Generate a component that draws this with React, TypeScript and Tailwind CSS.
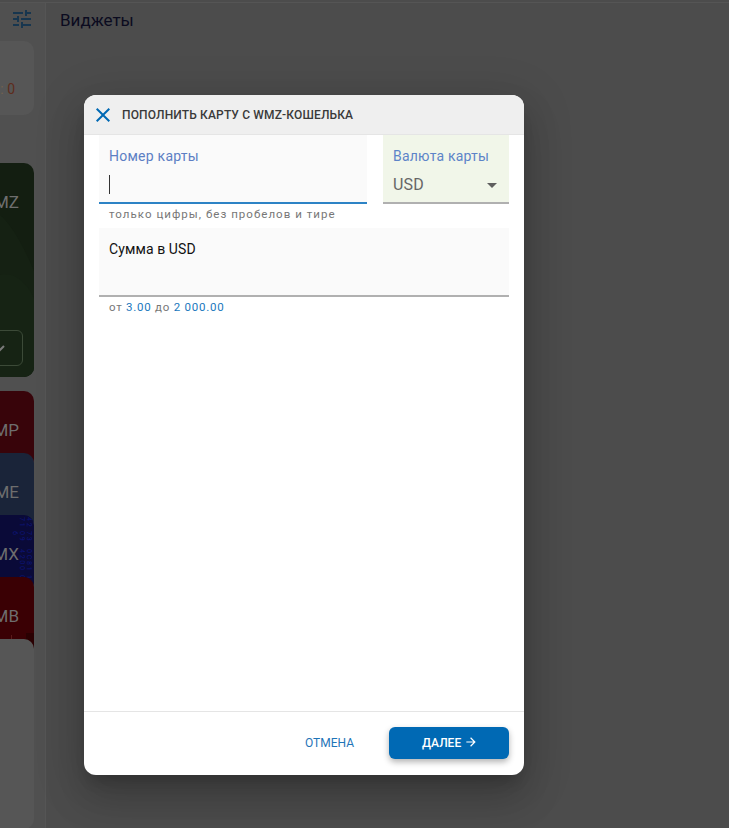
export default function App() {
  const roboto = { fontFamily: 'Roboto, "Noto Sans", sans-serif' };
  const columns = ["4 2 7 1", "7 3 0 9 6", "0 C 8 1 4 2 0 0", "1 0 C 0 4 9"];
  return (
    <div className="relative h-[828px] w-[729px] overflow-hidden bg-[#4c4c4c] font-['Roboto',sans-serif]">
      <div className="flex h-full flex-col">
        <div className="h-[3px] border-b border-[#555555]" />
        <div className="flex min-h-0 flex-1">
          <aside className="flex w-[46px] shrink-0 flex-col overflow-hidden border-r border-[#555555] bg-[#505050]">
            <div className="flex h-[38px] shrink-0 pl-[10px] pt-[4px]">
              <svg viewBox="0 0 24 24" className="h-6 w-6 fill-[#17364f]">
                <path d="M3 17v2h6v-2H3zM3 5v2h10V5H3zm10 16v-2h8v-2h-8v-2h-2v6h2zM7 9v2H3v2h4v2h2V9H7zm14 4v-2H11v2h10zm-6-4h2V7h4V5h-4V3h-2v6z" />
              </svg>
            </div>
            <div className="flex h-[74px] w-[34px] shrink-0 items-center justify-end rounded-r-[10px] bg-[#565656] pr-[19px] pt-[22px] text-sm text-[#5e2c1c]">
              <span className="text-[#75624f]">:&nbsp;</span>0
            </div>

            <div className="relative mt-[48px] flex h-[214px] w-[34px] shrink-0 flex-col overflow-hidden rounded-r-[10px] bg-[#131e11] pt-[28px]">
              <svg viewBox="0 0 34 214" className="absolute inset-0 h-full w-full">
                <path d="M0 52C12 62 24 84 34 108V214H0Z" className="fill-[#152113]" />
                <path d="M0 112C14 108 28 120 34 136V214H0Z" className="fill-[#162314]" />
              </svg>
              <div className="relative flex justify-end whitespace-nowrap pr-[15px] text-[17px] leading-[22px] text-[#6e6e6e]">MZ</div>
              <div className="relative ml-[-20px] mt-[117px] flex h-[36px] w-[43px] shrink-0 items-center justify-end rounded-md border border-[#3c4a38] pr-[16px]">
                <svg viewBox="0 0 12 12" className="h-3 w-3 fill-none stroke-[#7a7a7a] stroke-2">
                  <path d="M2 4l4 4 4-4" />
                </svg>
              </div>
            </div>

            <div className="mt-[14px] flex h-[78px] w-[34px] shrink-0 justify-end whitespace-nowrap rounded-r-[10px] bg-[#38040a] pr-[15px] pt-[28px] text-[17px] leading-[22px] text-[#6e6e6e]">МР</div>
            <div className="mt-[-16px] flex h-[78px] w-[34px] shrink-0 justify-end whitespace-nowrap rounded-r-[10px] bg-[#1a2439] pr-[15px] pt-[28px] text-[17px] leading-[22px] text-[#6e6e6e]">МЕ</div>
            <div className="relative mt-[-16px] h-[78px] w-[34px] shrink-0 overflow-hidden rounded-r-[10px] bg-[#0a0a38]">
              <div className="absolute right-[2px] top-[2px] flex gap-[3px] text-[7px] leading-[7px] text-[#0c1478] [writing-mode:vertical-rl]">
                {columns.map((c) => (
                  <span key={c}>{c}</span>
                ))}
              </div>
              <div className="relative flex justify-end whitespace-nowrap pr-[15px] pt-[28px] text-[17px] leading-[22px] text-[#6e6e6e]">МХ</div>
            </div>
            <div className="relative mt-[-16px] flex h-[78px] w-[34px] shrink-0 justify-end overflow-hidden whitespace-nowrap rounded-r-[10px] bg-[#3a0004] pr-[15px] pt-[28px] text-[17px] leading-[22px] text-[#6e6e6e]">
              МВ
              <span className="absolute bottom-0 left-[11px] h-[20px] w-px bg-[#5a1a1a]" />
              <span className="absolute bottom-0 right-0 h-[22px] w-[8px] bg-[#2a0002]" />
            </div>
            <div className="relative mt-[-16px] h-[190px] w-[34px] shrink-0 rounded-r-[10px] bg-[#565656]" />
          </aside>
          <main className="flex-1 pl-[14px] pt-[5px] text-[17px] text-[#0b0b1f]">Виджеты</main>
        </div>
      </div>

      <div
        style={roboto}
        className="absolute left-[84px] top-[95px] flex h-[680px] w-[440px] flex-col overflow-hidden rounded-xl bg-white shadow-[0_11px_15px_-7px_rgba(0,0,0,0.2),0_24px_38px_3px_rgba(0,0,0,0.14),0_9px_46px_8px_rgba(0,0,0,0.12)]"
      >
        <div className="flex h-10 shrink-0 items-center border-b border-[#e5e5e5] bg-[#efefef] pl-[7px]">
          <svg viewBox="0 0 24 24" className="h-6 w-6 fill-[#0069b4]">
            <path d="M19 6.41L17.59 5 12 10.59 6.41 5 5 6.41 10.59 12 5 17.59 6.41 19 12 13.41 17.59 19 19 17.59 13.41 12z" />
          </svg>
          <span className="ml-[7px] text-xs font-medium uppercase tracking-[0.15px] text-[#3a3a3a]">Пополнить карту с WMZ-кошелька</span>
        </div>

        <div className="flex-1 px-[15px]">
          <div className="flex gap-4">
            <div className="w-[268px]">
              <div className="h-[69px] border-b-2 border-[#2d83c5] bg-[#fafafa] px-[10px] pt-[12px]">
                <div className="text-sm leading-[18px] tracking-[0.25px] text-[#5d7fc4]">Номер карты</div>
                <div className="mt-[10px] h-[19px] w-px bg-[#333]" />
              </div>
              <div className="whitespace-nowrap px-[10px] pb-[1px] pt-[3px] text-[11.5px] leading-[14px] tracking-[1.03px] text-[#777]">только цифры, без пробелов и тире</div>
            </div>
            <div className="h-[69px] w-[126px] border-b-2 border-[#b0b0b0] bg-[#f1f6e9] px-[10px] pt-[12px]">
              <div className="text-sm leading-[18px] tracking-[0.2px] text-[#5d84c8]">Валюта карты</div>
              <div className="mt-[8px] flex items-center justify-between pr-[2px]">
                <span className="text-base leading-[24px] tracking-[0.2px] text-[#666]">USD</span>
                <span className="h-0 w-0 border-x-[5px] border-t-[5px] border-x-transparent border-t-[#5f5f5f]" />
              </div>
            </div>
          </div>

          <div className="mt-[6px] h-[69px] border-b-2 border-[#b0b0b0] bg-[#fafafa] px-[10px] pt-[12px] text-sm leading-[18px] tracking-[0.1px] text-[#111]">Сумма в USD</div>
          <div className="px-[10px] pt-[3px] text-[11.5px] leading-[14px] tracking-[0.75px] text-[#777]">
            от <span className="text-[#1a78bd]">3.00</span> до <span className="text-[#1a78bd]">2 000.00</span>
          </div>
        </div>

        <div className="flex h-[64px] shrink-0 items-center justify-end border-t border-[#e5e5e5] pb-[2px] pr-[15px]">
          <button className="mr-[35px] text-xs uppercase text-[#1f75b8]">Отмена</button>
          <button className="flex h-8 w-[120px] items-center gap-[3px] rounded-md bg-[#0069b4] pl-[33px] text-xs font-medium uppercase text-white shadow-[0_3px_6px_rgba(0,0,0,0.3)]">
            Далее
            <svg viewBox="0 0 24 24" className="mb-[2px] h-[14px] w-[14px] fill-white">
              <path d="M12 4l-1.41 1.41L16.17 11H4v2h12.17l-5.58 5.59L12 20l8-8z" />
            </svg>
          </button>
        </div>
      </div>
    </div>
  );
}
